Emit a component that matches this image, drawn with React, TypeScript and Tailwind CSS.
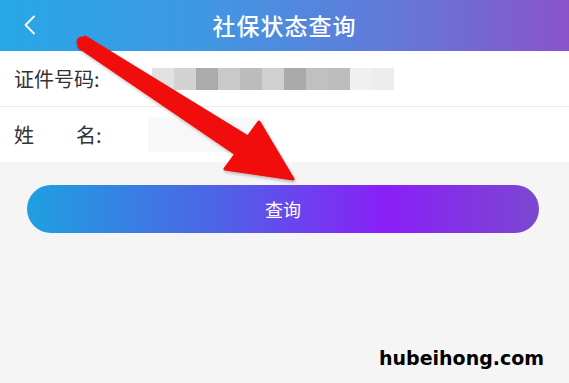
import React from 'react'

const blocks = [
  '#e2e2e2', '#d3d3d3', '#ababab', '#c9c9c9', '#bcbcbc', '#d0d0d0',
  '#aaaaaa', '#c0c0c0', '#bdbdbd', '#f0f0f0', '#ededed',
]

function Arrow() {
  return (
    <svg
      className="pointer-events-none absolute left-0 top-0"
      width="569"
      height="383"
      viewBox="0 0 569 383"
    >
      <defs>
        <filter id="sh" x="-10%" y="-10%" width="130%" height="130%">
          <feDropShadow dx="1" dy="2" stdDeviation="1.5" floodColor="#000" floodOpacity="0.25" />
        </filter>
      </defs>
      <g filter="url(#sh)">
        <polygon
          points="85,37 248,137 259,122 293,179 225,169 236,154 79,47"
          fill="#f20808"
          stroke="#f20808"
          strokeWidth="3"
          strokeLinejoin="round"
        />
        <circle cx="82" cy="42" r="5.5" fill="#f20808" />
      </g>
    </svg>
  )
}

export default function App() {
  return (
    <div
      className="relative h-[383px] w-[569px] overflow-hidden bg-[#f5f5f5]"
      style={{ fontFamily: '"Noto Sans CJK SC", "Noto Sans", sans-serif' }}
    >
      {/* header */}
      <div className="relative flex h-[51px] items-center justify-center bg-[linear-gradient(90deg,#27a7e6_0%,#3f98e2_35%,#6478d8_70%,#8953cb_100%)]">
        <svg className="absolute left-[23px] top-[15px]" width="14" height="20" viewBox="0 0 14 20">
          <path d="M11 1.5 L2.5 10 L11 18.5" fill="none" stroke="#fff" strokeWidth="1.8" strokeLinecap="round" strokeLinejoin="round" />
        </svg>
        <span className="text-[23px] font-medium tracking-[1px] text-white">社保状态查询</span>
      </div>

      {/* form */}
      <div className="bg-white">
        <div className="flex h-[56px] items-center border-b border-[#ebebeb] pl-[14px]">
          <span className="w-[126px] text-[20px] text-[#333]">证件号码:</span>
          <div className="ml-[12px] flex h-[22px]">
            {blocks.map((c, i) => (
              <div key={i} className="h-full w-[22px]" style={{ backgroundColor: c }} />
            ))}
          </div>
        </div>
        <div className="flex h-[55px] items-center pl-[14px]">
          <span className="flex w-[86px] text-[20px] text-[#333]">
            <span>姓</span>
            <span className="ml-[42px]">名:</span>
          </span>
          <div className="ml-[48px] h-[35px] w-[117px] bg-[#f8f8f8]" />
        </div>
      </div>

      {/* button */}
      <div className="pl-[27px] pr-[30px] pt-[23px]">
        <button className="flex h-[48px] w-full items-center justify-center rounded-full bg-[linear-gradient(90deg,#1fa0e0_0%,#4f62e6_38%,#8a1ff8_70%,#7b48d0_100%)] text-[18px] text-white">
          查询
        </button>
      </div>

      <Arrow />

      <div
        className="absolute left-[379px] top-[349px] text-[19px] font-bold leading-none text-black"
        style={{ fontFamily: '"DejaVu Sans", sans-serif' }}
      >
        hubeihong.com
      </div>
    </div>
  )
}
